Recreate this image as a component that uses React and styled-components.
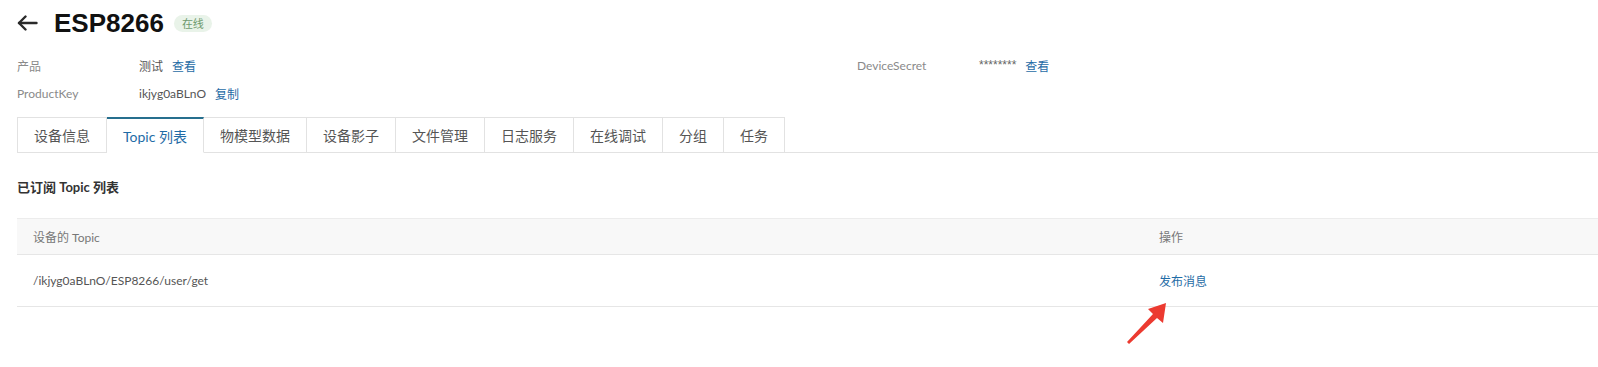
import React from "react";
import styled, { createGlobalStyle } from "styled-components";

const GlobalStyle = createGlobalStyle`
  html, body {
    margin: 0;
    padding: 0;
    background: #fff;
  }
  body {
    font-family: Lato, "Noto Sans CJK SC", sans-serif;
    color: #333;
  }
`;

const Page = styled.div`
  position: relative;
  width: 1598px;
  height: 367px;
  padding-left: 17px;
  box-sizing: border-box;
  overflow: hidden;
`;

const Header = styled.div`
  display: flex;
  align-items: center;
  height: 45px;
  padding-top: 1px;
  box-sizing: border-box;
`;

const BackButton = styled.button`
  display: flex;
  align-items: center;
  border: none;
  background: none;
  padding: 0;
  margin-right: 16px;
  cursor: pointer;
  color: #2a2a2a;
`;

const Title = styled.h1`
  margin: 0;
  font-family: "Liberation Sans", "Noto Sans CJK SC", sans-serif;
  font-size: 26px;
  font-weight: 700;
  color: #111;
  line-height: 1;
`;

const StatusBadge = styled.span`
  margin-left: 10px;
  padding: 0 8px;
  height: 17px;
  line-height: 17px;
  border-radius: 9px;
  background: #e9f3e9;
  color: #6e9a6e;
  font-size: 11px;
  font-family: "Noto Sans CJK SC", sans-serif;
`;

const InfoGrid = styled.div`
  display: grid;
  grid-template-columns: 122px 718px 122px auto;
  grid-auto-rows: 28px;
  align-items: center;
  margin-top: 6px;
  font-size: 12px;
`;

const Label = styled.span`
  color: #8a8a8a;
`;

const Value = styled.span`
  color: #555;
  display: flex;
  gap: 9px;
  align-items: center;
`;

const Secret = styled.span`
  font-family: "Liberation Sans", sans-serif;
  color: #666;
`;

const Link = styled.a`
  color: #1f6ca6;
  text-decoration: none;
  cursor: pointer;
`;

const Tabs = styled.div`
  display: flex;
  margin-top: 10px;
  border-bottom: 1px solid #e2e2e2;
  height: 36px;
  box-sizing: border-box;
`;

const Tab = styled.div`
  padding: 0 16px;
  height: 36px;
  box-sizing: border-box;
  display: flex;
  align-items: center;
  font-size: 14px;
  border: 1px solid #e2e2e2;
  border-left: ${({ $first }) => ($first ? "1px solid #e2e2e2" : "none")};
  border-top: ${({ $active }) => ($active ? "2px solid #266f8e" : "1px solid #e2e2e2")};
  border-bottom: ${({ $active }) => ($active ? "1px solid #fff" : "1px solid #e2e2e2")};
  color: ${({ $active }) => ($active ? "#1f6ca6" : "#555")};
  background: #fff;
  cursor: pointer;
`;

const SectionTitle = styled.h3`
  margin: 25px 0 0;
  font-size: 13px;
  font-weight: 700;
  color: #333;
  line-height: 18px;
`;

const Table = styled.div`
  margin-top: 22px;
  font-size: 12px;
`;

const Row = styled.div`
  display: grid;
  grid-template-columns: 1126px 1fr;
  align-items: center;
  height: ${({ $head }) => ($head ? "37px" : "52px")};
  background: ${({ $head }) => ($head ? "#f8f8f8" : "#fff")};
  border-top: ${({ $head }) => ($head ? "1px solid #ececec" : "none")};
  border-bottom: 1px solid #e6e6e6;
  box-sizing: border-box;
  color: ${({ $head }) => ($head ? "#777" : "#555")};
`;

const Cell = styled.div`
  padding: 0 16px;
`;

const Pointer = styled.svg`
  position: absolute;
  left: 1120px;
  top: 296px;
`;

const tabs = ["设备信息", "Topic 列表", "物模型数据", "设备影子", "文件管理", "日志服务", "在线调试", "分组", "任务"];

export default function App() {
  return (
    <>
      <GlobalStyle />
      <Page>
        <Header>
          <BackButton aria-label="返回">
            <svg width="21" height="16" viewBox="0 0 21 16" fill="none" stroke="currentColor" strokeWidth="2.4" strokeLinecap="round" strokeLinejoin="round">
              <path d="M19.5 8H2" />
              <path d="M8.5 1.5L2 8l6.5 6.5" />
            </svg>
          </BackButton>
          <Title>ESP8266</Title>
          <StatusBadge>在线</StatusBadge>
        </Header>

        <InfoGrid>
          <Label>产品</Label>
          <Value>测试 <Link>查看</Link></Value>
          <Label>DeviceSecret</Label>
          <Value><Secret>********</Secret> <Link>查看</Link></Value>
          <Label>ProductKey</Label>
          <Value>ikjyg0aBLnO <Link>复制</Link></Value>
        </InfoGrid>

        <Tabs>
          {tabs.map((t, i) => (
            <Tab key={t} $first={i === 0} $active={i === 1}>{t}</Tab>
          ))}
        </Tabs>

        <SectionTitle>已订阅 Topic 列表</SectionTitle>

        <Table>
          <Row $head>
            <Cell>设备的 Topic</Cell>
            <Cell>操作</Cell>
          </Row>
          <Row>
            <Cell>/ikjyg0aBLnO/ESP8266/user/get</Cell>
            <Cell><Link>发布消息</Link></Cell>
          </Row>
        </Table>

        <Pointer width="56" height="56" viewBox="0 0 56 56">
          <polygon points="46,7 43,27 37,22 9,48 7,46 33,18 28,13" fill="#ec3a30" />
        </Pointer>
      </Page>
    </>
  );
}
